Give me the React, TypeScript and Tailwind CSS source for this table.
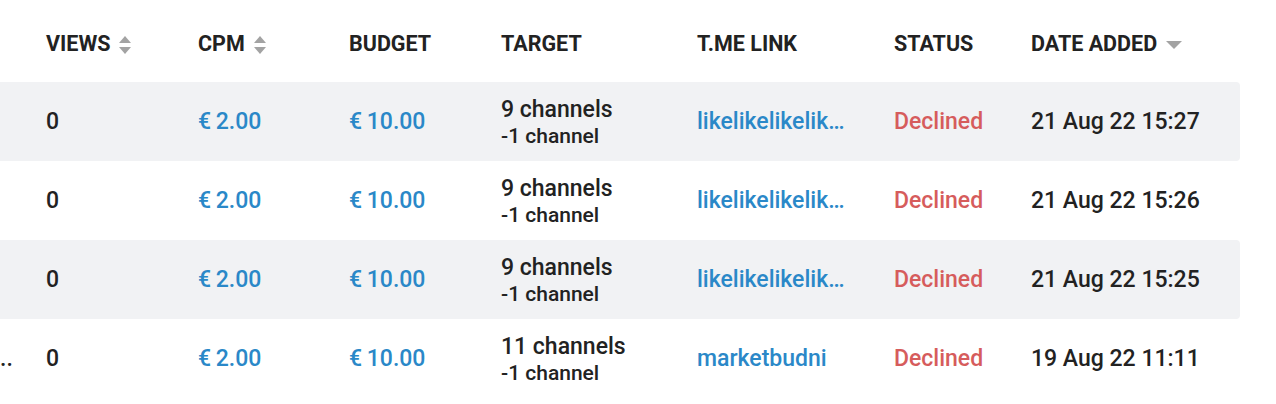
import React from 'react';

type Row = {
    views: string;
    cpm: string;
    budget: string;
    channels: string;
    minus: string;
    link: string;
    status: string;
    date: string;
    lead?: string;
};

const rows: Row[] = [
    { views: '0', cpm: '€\u20092.00', budget: '€\u200910.00', channels: '9 channels', minus: '-1 channel', link: 'likelikelikelik…', status: 'Declined', date: '21 Aug 22 15:27' },
    { views: '0', cpm: '€\u20092.00', budget: '€\u200910.00', channels: '9 channels', minus: '-1 channel', link: 'likelikelikelik…', status: 'Declined', date: '21 Aug 22 15:26' },
    { views: '0', cpm: '€\u20092.00', budget: '€\u200910.00', channels: '9 channels', minus: '-1 channel', link: 'likelikelikelik…', status: 'Declined', date: '21 Aug 22 15:25' },
    { views: '0', cpm: '€\u20092.00', budget: '€\u200910.00', channels: '11 channels', minus: '-1 channel', link: 'marketbudni', status: 'Declined', date: '19 Aug 22 11:11', lead: '..' },
];

const cols = 'grid grid-cols-[46px_152px_151px_152px_196px_197px_137px_209px]';

function SortBoth() {
    return (
        <svg width="14" height="20" viewBox="0 0 14 20" className="ml-[8px]">
            <path d="M7 1 L13 8 L1 8 Z" fill="#a3a3a3" />
            <path d="M7 19 L13 12 L1 12 Z" fill="#a3a3a3" />
        </svg>
    );
}

function SortDown() {
    return (
        <svg width="18" height="10" viewBox="0 0 18 10" className="ml-[8px]">
            <path d="M1 1 L17 1 L9 9 Z" fill="#a3a3a3" />
        </svg>
    );
}

export default function App() {
    return (
        <main className="w-[1276px] h-[404px] bg-white overflow-hidden font-['Roboto',sans-serif] font-medium text-[#222]">
            <div className={`${cols} h-[82px] pt-[7px] items-center text-[21.5px] font-bold uppercase`}>
                <div></div>
                <div className="flex items-center">Views<SortBoth /></div>
                <div className="flex items-center">CPM<SortBoth /></div>
                <div>Budget</div>
                <div>Target</div>
                <div>T.me link</div>
                <div>Status</div>
                <div className="flex items-center">Date added<SortDown /></div>
            </div>
            {rows.map((r, i) => (
                <div
                    key={i}
                    className={`${cols} h-[79px] pt-[2px] items-center text-[23px] rounded-r-[4px] w-[1240px] ${i % 2 === 0 ? 'bg-[#f1f2f4]' : 'bg-white'}`}
                >
                    <div className="whitespace-nowrap">{r.lead}</div>
                    <div>{r.views}</div>
                    <div className="text-[#2a88c8]">{r.cpm}</div>
                    <div className="text-[#2a88c8]">{r.budget}</div>
                    <div className="flex flex-col leading-[27px]">
                        <span className="text-[23px]">{r.channels}</span>
                        <span className="text-[21px]">{r.minus}</span>
                    </div>
                    <div className="text-[#2a88c8] whitespace-nowrap">{r.link}</div>
                    <div className="text-[#d65c5c]">{r.status}</div>
                    <div>{r.date}</div>
                </div>
            ))}
        </main>
    );
}
